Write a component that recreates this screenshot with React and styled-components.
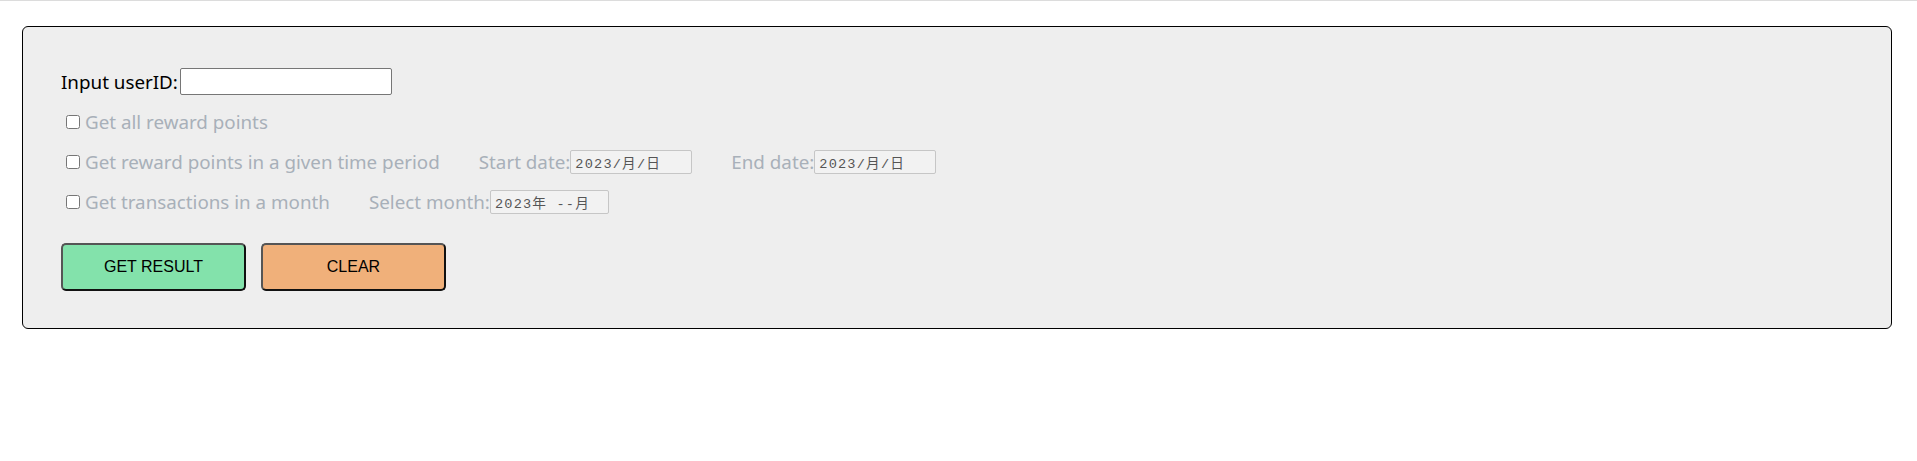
import React from "react";
import styled, { createGlobalStyle } from "styled-components";

const GlobalStyle = createGlobalStyle`
  body {
    margin: 0;
    background: #fff;
    font-family: "Noto Sans", "Open Sans", sans-serif;
  }
`;

const Page = styled.div`
  border-top: 1px solid #dcdcdc;
  padding: 25px 25px 0 22px;
`;

const Card = styled.div`
  display: flex;
  flex-direction: column;
  background: #eeeeee;
  border: 1px solid #000;
  border-radius: 6px;
  padding: 41px 38px 37px;
`;

const Row = styled.div`
  display: flex;
  align-items: center;
  height: ${props => props.height || 40}px;
  margin-top: ${props => props.offset || 0}px;
  font-size: 18.8px;
  color: ${props => (props.muted ? "#a8b0b9" : "#000")};
`;

const Label = styled.label`
  display: flex;
  align-items: center;
  white-space: nowrap;
`;

const Check = styled.input`
  width: 14px;
  height: 14px;
  margin: 0 5px 0 5px;
`;

const Field = styled.span`
  display: flex;
  align-items: center;
  margin-left: ${props => props.gap || 39}px;
  white-space: nowrap;
`;

const TextInput = styled.input`
  width: 212px;
  height: 27px;
  box-sizing: border-box;
  margin-left: 2px;
  border: 1px solid #767676;
  border-radius: 2px;
  background: #fff;
`;

const DateBox = styled.input`
  width: ${props => props.width || 122}px;
  height: 24px;
  box-sizing: border-box;
  margin: 0;
  padding: 0 4px;
  border: 1px solid #c6c6c6;
  border-radius: 2px;
  background: #f2f2f2;
  color: #555;
  font-family: "Liberation Mono", "Noto Sans CJK JP", monospace;
  font-size: 13.6px;
  letter-spacing: 1.2px;
`;

const Buttons = styled.div`
  display: flex;
  gap: 15px;
  margin-top: 21px;
`;

const Button = styled.button`
  width: 185px;
  height: 48px;
  border: 2px solid;
  border-color: #555 #111 #111 #555;
  border-radius: 5px;
  background: ${props => props.bg};
  font-family: "Liberation Sans", Arial, sans-serif;
  font-size: 16px;
  color: #000;
  cursor: pointer;
`;

export default function App() {
  const [userId, setUserId] = React.useState("");

  return (
    <>
      <GlobalStyle />
      <Page>
        <Card>
          <Row height={27}>
            Input userID:
            <TextInput
              type="text"
              value={userId}
              onChange={e => setUserId(e.target.value)}
            />
          </Row>
          <Row muted height={41} offset={6}>
            <Label>
              <Check type="checkbox" />
              Get all reward points
            </Label>
          </Row>
          <Row muted>
            <Label>
              <Check type="checkbox" />
              Get reward points in a given time period
            </Label>
            <Field>
              Start date:
              <DateBox type="text" disabled value="2023/月/日" readOnly />
            </Field>
            <Field>
              End date:
              <DateBox type="text" disabled value="2023/月/日" readOnly />
            </Field>
          </Row>
          <Row muted>
            <Label>
              <Check type="checkbox" />
              Get transactions in a month
            </Label>
            <Field>
              Select month:
              <DateBox type="text" width={119} disabled value="2023年 --月" readOnly />
            </Field>
          </Row>
          <Buttons>
            <Button bg="#83e2ab">GET RESULT</Button>
            <Button bg="#f0b07a">CLEAR</Button>
          </Buttons>
        </Card>
      </Page>
    </>
  );
}
